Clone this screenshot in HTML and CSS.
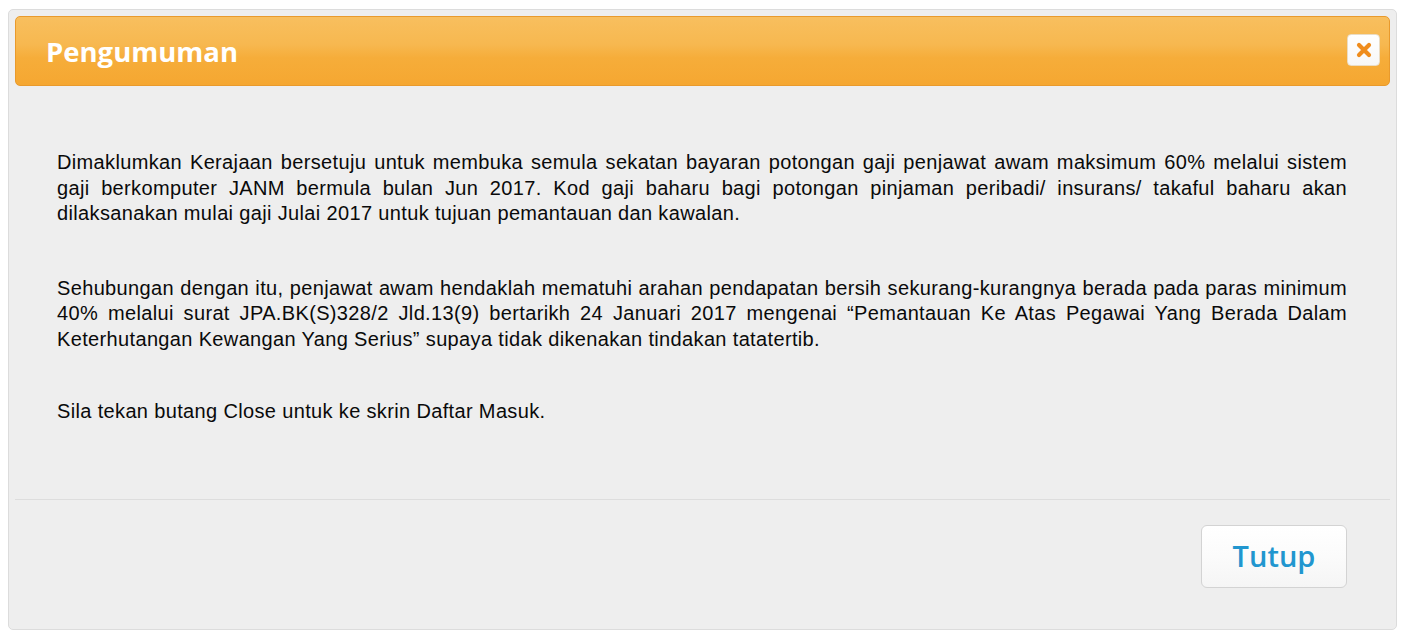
FILE: index.html
```html
<!DOCTYPE html>
<html lang="ms">
<head>
<meta charset="utf-8">
<title>Pengumuman</title>
<link rel="stylesheet" href="styles.css">
</head>
<body>
<div class="page">
  <div class="dialog">
    <div class="titlebar">
      <span class="title">Pengumuman</span>
      <button class="close" type="button" aria-label="Close">
        <svg width="16" height="16" viewBox="0 0 16 16"><path d="M3 3 L13 13 M13 3 L3 13" stroke="#ef8c1c" stroke-width="4.2" stroke-linecap="round"/></svg>
      </button>
    </div>
    <div class="content">
      <p class="p1">Dimaklumkan Kerajaan bersetuju untuk membuka semula sekatan bayaran potongan gaji penjawat awam maksimum 60% melalui sistem gaji berkomputer JANM bermula bulan Jun 2017. Kod gaji baharu bagi potongan pinjaman peribadi/ insurans/ takaful baharu akan dilaksanakan mulai gaji Julai 2017 untuk tujuan pemantauan dan kawalan.</p>
      <p class="p2">Sehubungan dengan itu, penjawat awam hendaklah mematuhi arahan pendapatan bersih sekurang-kurangnya berada pada paras minimum 40% melalui surat JPA.BK(S)328/2 Jld.13(9) bertarikh 24 Januari 2017 mengenai “Pemantauan Ke Atas Pegawai Yang Berada Dalam Keterhutangan Kewangan Yang Serius” supaya tidak dikenakan tindakan tatatertib.</p>
      <p class="p3">Sila tekan butang Close untuk ke skrin Daftar Masuk.</p>
    </div>
    <div class="buttonpane">
      <button class="btn" type="button">Tutup</button>
    </div>
  </div>
</div>
</body>
</html>
```

FILE: styles.css
```css
html, body {
  margin: 0;
  padding: 0;
  background: #ffffff;
}

.page {
  padding: 9px 10px 0 8px;
}

.dialog {
  box-sizing: border-box;
  width: 1389px;
  height: 621px;
  border: 1px solid #dcdcdc;
  border-radius: 5px;
  background: #eeeeee;
  padding: 6px 6px 0 6px;
  display: flex;
  flex-direction: column;
}

.titlebar {
  box-sizing: border-box;
  height: 70px;
  border: 1px solid #e99a2c;
  border-radius: 5px;
  background: linear-gradient(#f8bf5e 0%, #f7b850 40%, #f6ad3a 60%, #f5a731 100%);
  display: flex;
  align-items: center;
  justify-content: space-between;
  padding: 0 9px 0 30px;
}

.title {
  font-family: "Open Sans", sans-serif;
  font-weight: 700;
  font-size: 27.5px;
  color: #ffffff;
}

.close {
  box-sizing: border-box;
  width: 33px;
  height: 32px;
  margin-bottom: 3px;
  border: 1px solid #eadcc4;
  border-radius: 4px;
  background: linear-gradient(#ffffff, #f7f7f7);
  display: flex;
  align-items: center;
  justify-content: center;
  padding: 0;
}

.close svg {
  display: block;
}

.content {
  padding: 64px 43px 0 42px;
  height: 414px;
  box-sizing: border-box;
  border-bottom: 1px solid #dddddd;
  font-family: "Liberation Sans", Arial, sans-serif;
  font-size: 20px;
  letter-spacing: 0.35px;
  line-height: 25.5px;
  color: #0a0a0a;
}

.content p {
  margin: 0;
  text-align: justify;
}

.content .p1 {
  margin-bottom: 49px;
}

.content .p2 {
  margin-bottom: 47px;
}

.buttonpane {
  display: flex;
  justify-content: flex-end;
  padding: 25px 43px 0 0;
}

.btn {
  box-sizing: border-box;
  width: 146px;
  height: 63px;
  border: 1px solid #d3d3d3;
  border-radius: 6px;
  background: linear-gradient(#ffffff 0%, #fbfbfb 50%, #f5f5f5 100%);
  font-family: "Open Sans", sans-serif;
  font-weight: 600;
  font-size: 29px;
  color: #2196cf;
  padding: 0 0 2px 0;
  cursor: pointer;
}
```
